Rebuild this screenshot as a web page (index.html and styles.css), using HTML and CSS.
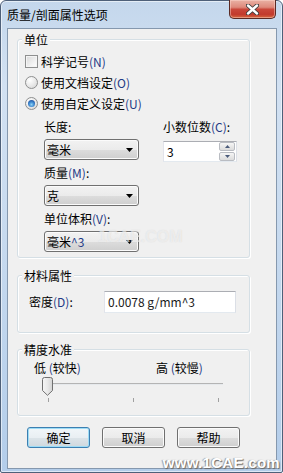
FILE: index.html
```html
<!DOCTYPE html>
<html lang="zh-CN">
<head>
<meta charset="utf-8">
<title>质量/剖面属性选项</title>
<link rel="stylesheet" href="styles.css">
</head>
<body>
<div class="window">
  <div class="titlebar">
    <div class="title">质量/剖面属性选项</div>
    <div class="close">
      <svg width="13" height="11" viewBox="0 0 13 11">
        <path d="M2 1.5 L11 9.5 M11 1.5 L2 9.5" stroke="#3b3b3b" stroke-width="4.2" stroke-linecap="round"/>
        <path d="M2 1.5 L11 9.5 M11 1.5 L2 9.5" stroke="#ffffff" stroke-width="2.4" stroke-linecap="round"/>
      </svg>
    </div>
  </div>
  <div class="client">
    <div class="group g1">
      <div class="legend">单位</div>
      <div class="opt"><span class="cb"></span><span>科学记号<span class="lat">(N)</span></span></div>
      <div class="opt"><span class="radio"></span><span>使用文档设定<span class="lat">(O)</span></span></div>
      <div class="opt"><span class="radio on"><span class="dot"></span></span><span>使用自定义设定<span class="lat">(U)</span></span></div>
      <div class="units">
        <div class="col-left">
          <div class="lbl">长度:</div>
          <div class="combo"><span>毫米</span><svg class="arr" width="7" height="4" viewBox="0 0 7 4"><path d="M0 0 H7 L3.5 4 Z" fill="#000"/></svg></div>
          <div class="lbl next">质量<span class="lat">(M)</span>:</div>
          <div class="combo"><span>克</span><svg class="arr" width="7" height="4" viewBox="0 0 7 4"><path d="M0 0 H7 L3.5 4 Z" fill="#000"/></svg></div>
          <div class="lbl next">单位体积<span class="lat">(V)</span>:</div>
          <div class="combo"><span>毫米<span class="lat">^3</span></span><svg class="arr" width="7" height="4" viewBox="0 0 7 4"><path d="M0 0 H7 L3.5 4 Z" fill="#000"/></svg></div>
        </div>
        <div class="col-right">
          <div class="lbl">小数位数<span class="lat">(C)</span>:</div>
          <div class="spin">
            <div class="spin-text">3</div>
            <div class="spin-btns">
              <div class="sb"><svg width="5" height="3" viewBox="0 0 5 3"><path d="M0 3 H5 L2.5 0 Z" fill="#4a5a7a"/></svg></div>
              <div class="sb"><svg width="5" height="3" viewBox="0 0 5 3"><path d="M0 0 H5 L2.5 3 Z" fill="#4a5a7a"/></svg></div>
            </div>
          </div>
        </div>
      </div>
    </div>

    <div class="group g2">
      <div class="legend">材料属性</div>
      <div class="density">
        <div class="dlabel">密度<span class="lat">(D)</span>:</div>
        <div class="edit">0.0078 g/mm^3</div>
      </div>
    </div>

    <div class="group g3">
      <div class="legend">精度水准</div>
      <div class="lvl">
        <div class="lvl-low">低 <span class="lat">(</span>较快<span class="lat">)</span></div>
        <div>高 <span class="lat">(</span>较慢<span class="lat">)</span></div>
      </div>
      <div class="slider">
        <div class="track"></div>
        <svg class="thumb" width="11" height="19" viewBox="0 0 11 19">
          <defs>
            <linearGradient id="tg" x1="0" y1="0" x2="1" y2="0">
              <stop offset="0" stop-color="#f6f6f6"/>
              <stop offset="0.5" stop-color="#e9e9e9"/>
              <stop offset="1" stop-color="#d3d3d3"/>
            </linearGradient>
          </defs>
          <path d="M0.5 2.5 Q0.5 0.5 2.5 0.5 H8.5 Q10.5 0.5 10.5 2.5 V13.5 L5.5 18.3 L0.5 13.5 Z" fill="url(#tg)" stroke="#707070" stroke-width="1"/>
        </svg>
        <span class="tick t1"></span>
        <span class="tick t2"></span>
        <span class="tick t3"></span>
      </div>
    </div>

    <div class="buttons">
      <div class="btn default">确定</div>
      <div class="btn">取消</div>
      <div class="btn">帮助</div>
    </div>
  </div>
  <div class="wm-mid">1CAE.COM</div>
  <div class="wm">www.1CAE.com</div>
</div>
</body>
</html>
```

FILE: styles.css
```css
* { box-sizing: border-box; }

html, body {
  margin: 0;
  padding: 0;
}

body {
  width: 283px;
  height: 473px;
  overflow: hidden;
  background: #ffffff;
  font-family: "Noto Sans CJK SC", "Noto Sans", sans-serif;
  font-size: 12px;
  color: #000;
}

.window {
  position: relative;
  width: 283px;
  height: 473px;
  border: 1px solid #4e6079;
  border-radius: 6px 6px 2px 2px;
  padding: 0 5px 3px 6px;
  background: linear-gradient(180deg, #c4d7ec 0%, #d2e1f2 18%, #c7daef 50%, #b3cdea 100%);
  box-shadow: inset 0 0 0 1px rgba(255, 255, 255, 0.55);
  display: flex;
  flex-direction: column;
}

.titlebar {
  height: 27px;
  display: flex;
  justify-content: space-between;
  align-items: flex-start;
}

.title {
  margin-top: 6px;
  line-height: 16px;
  font-size: 12px;
  color: #000;
}

.close {
  width: 47px;
  height: 19px;
  margin-top: -1px;
  margin-right: 1px;
  border: 1px solid #5a2a24;
  border-top: none;
  border-radius: 0 0 5px 5px;
  background: linear-gradient(180deg, #e9b1a4 0%, #de8a7c 40%, #c9473a 52%, #c23a2d 80%, #d5683f 100%);
  box-shadow: inset 0 0 0 1px rgba(255, 220, 210, 0.45);
  display: flex;
  align-items: center;
  justify-content: center;
}

.client {
  height: 441px;
  border: 1px solid #8598ae;
  background: #f0f0f0;
}

.lat { color: #1e3a86; }

.group {
  position: relative;
  margin-left: 9px;
  width: 233px;
  border: 1px solid #d5dfe5;
  border-radius: 3px;
  box-shadow: inset 1px 1px 0 #ffffff, 1px 1px 0 #ffffff;
}

.legend {
  position: absolute;
  top: -8px;
  left: 4px;
  padding: 0 2px;
  background: #f0f0f0;
  line-height: 16px;
}

.g1 {
  margin-top: 10px;
  height: 219px;
  padding: 11px 0 0 7px;
}

.opt {
  height: 21px;
  display: flex;
  align-items: center;
  line-height: 16px;
}

.cb {
  width: 13px;
  height: 13px;
  margin-right: 3px;
  border: 1px solid #8e8f8f;
  background: linear-gradient(135deg, #d8d8d8 0%, #f0f0f0 60%, #ffffff 100%);
  box-shadow: inset 0 0 0 1px #f4f4f4;
}

.radio {
  width: 13px;
  height: 13px;
  margin-right: 3px;
  border-radius: 50%;
  border: 1px solid #8e8f8f;
  background: radial-gradient(circle at 35% 30%, #ffffff 0%, #ececec 45%, #d2d2d2 100%);
  display: flex;
  align-items: center;
  justify-content: center;
}

.radio .dot {
  width: 7px;
  height: 7px;
  border-radius: 50%;
  background: radial-gradient(circle at 50% 65%, #8fd3f6 0%, #3b86cf 45%, #173a86 100%);
}

.units {
  display: flex;
  margin-left: 19px;
  margin-top: 5px;
}

.col-left {
  width: 95px;
  display: flex;
  flex-direction: column;
}

.col-right {
  margin-left: 24px;
  width: 74px;
  display: flex;
  flex-direction: column;
}

.lbl {
  height: 16px;
  line-height: 16px;
  white-space: nowrap;
}

.lbl.next { margin-top: 5px; }

.combo {
  margin-top: 4px;
  height: 21px;
  border: 1px solid #707070;
  border-radius: 3px;
  background: linear-gradient(180deg, #f2f2f2 0%, #ebebeb 50%, #dddddd 51%, #cfcfcf 100%);
  box-shadow: inset 0 0 0 1px #fbfbfb;
  display: flex;
  align-items: center;
  justify-content: space-between;
  padding: 0 5px 0 2px;
  line-height: 16px;
}

.spin {
  margin-top: 6px;
  height: 21px;
  display: flex;
  border: 1px solid;
  border-color: #abadb3 #dbdfe6 #e3e9ef #e2e3ea;
  background: #fff;
}

.spin-text {
  flex: 1;
  padding-left: 3px;
  line-height: 19px;
}

.spin-btns {
  width: 17px;
  display: flex;
  flex-direction: column;
  gap: 1px;
  padding: 0 1px 0 0;
}

.sb {
  flex: 1;
  border: 1px solid #b9bcc2;
  border-radius: 2px;
  background: linear-gradient(180deg, #f6f6f6 0%, #e8e8e8 50%, #dcdcdc 100%);
  display: flex;
  align-items: center;
  justify-content: center;
}

.g2 {
  margin-top: 17px;
  height: 58px;
  padding: 15px 0 0 11px;
}

.density {
  display: flex;
  align-items: center;
}

.dlabel {
  width: 75px;
  line-height: 16px;
}

.edit {
  width: 132px;
  height: 22px;
  border: 1px solid;
  border-color: #abadb3 #dbdfe6 #e3e9ef #e2e3ea;
  background: #fff;
  padding-left: 3px;
  line-height: 20px;
  color: #1a1a1a;
}

.g3 {
  margin-top: 16px;
  height: 67px;
  padding-top: 10px;
}

.lvl {
  display: flex;
  padding-left: 16px;
  height: 16px;
  line-height: 16px;
}

.lvl-low { width: 122px; }

.slider {
  position: relative;
  margin-left: 24px;
  width: 182px;
  height: 28px;
}

.track {
  position: absolute;
  left: 1px;
  top: 7px;
  width: 180px;
  height: 2px;
  border-top: 1px solid #b4b4b4;
  border-bottom: 1px solid #e6e9ec;
}

.thumb {
  position: absolute;
  left: 0;
  top: 1px;
}

.tick {
  position: absolute;
  top: 22px;
  width: 1px;
  height: 4px;
  background: #a0a0a0;
}

.t1 { left: 6px; }
.t2 { left: 91px; }
.t3 { left: 176px; }

.buttons {
  display: flex;
  gap: 12px;
  margin-top: 11px;
  padding-left: 19px;
}

.btn {
  width: 63px;
  height: 21px;
  border: 1px solid #707070;
  border-radius: 3px;
  background: linear-gradient(180deg, #f2f2f2 0%, #ebebeb 50%, #dddddd 51%, #cfcfcf 100%);
  box-shadow: inset 0 0 0 1px #fbfbfb;
  text-align: center;
  line-height: 19px;
}

.btn.default {
  border-color: #3c7fb1;
  box-shadow: inset 0 0 0 1px #9ddcf6;
  background: linear-gradient(180deg, #f1f6f9 0%, #e9eff3 50%, #dce4e9 51%, #cfd8de 100%);
}

.wm {
  position: absolute;
  right: 2px;
  bottom: 1px;
  font-family: "Liberation Sans", Arial, sans-serif;
  font-weight: bold;
  font-size: 15px;
  letter-spacing: 0.3px;
  color: #ffffff;
  text-shadow: 1px 1px 1px #6a6a6a, -1px 0 1px #9a9a9a;
}

.wm-mid {
  position: absolute;
  left: 97px;
  top: 227px;
  font-family: "Liberation Sans", Arial, sans-serif;
  font-weight: bold;
  font-size: 16px;
  color: rgba(255, 255, 255, 0.55);
  text-shadow: 0 0 1px rgba(160, 160, 160, 0.35);
}
```
